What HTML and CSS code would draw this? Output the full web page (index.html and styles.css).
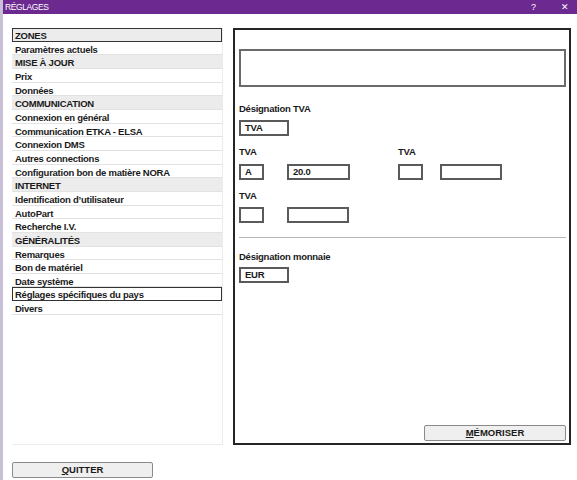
FILE: index.html
```html
<!DOCTYPE html>
<html lang="fr">
<head>
<meta charset="utf-8">
<title>Réglages</title>
<link rel="stylesheet" href="styles.css">
</head>
<body>
<div class="titlebar">
  <span class="title">RÉGLAGES</span>
  <span class="tb-btns"><span class="help">?</span><span class="close">✕</span></span>
</div>
<div class="window">
  <div class="leftcol">
    <ul class="list">
      <li class="hdr focus">ZONES</li>
      <li>Paramètres actuels</li>
      <li class="hdr">MISE À JOUR</li>
      <li>Prix</li>
      <li>Données</li>
      <li class="hdr">COMMUNICATION</li>
      <li>Connexion en général</li>
      <li>Communication ETKA - ELSA</li>
      <li>Connexion DMS</li>
      <li>Autres connections</li>
      <li>Configuration bon de matière NORA</li>
      <li class="hdr">INTERNET</li>
      <li>Identification d’utilisateur</li>
      <li>AutoPart</li>
      <li>Recherche I.V.</li>
      <li class="hdr">GÉNÉRALITÉS</li>
      <li>Remarques</li>
      <li>Bon de matériel</li>
      <li>Date système</li>
      <li class="sel">Réglages spécifiques du pays</li>
      <li>Divers</li>
    </ul>
    <button class="btn quit"><u>Q</u>UITTER</button>
  </div>
  <div class="panel">
    <div class="topbox"></div>
    <div class="label l1">Désignation TVA</div>
    <div class="field w50">TVA</div>
    <div class="grid g1">
      <div class="label">TVA</div>
      <div class="label">TVA</div>
      <div class="pair">
        <div class="field w25">A</div>
        <div class="field w63">20.0</div>
      </div>
      <div class="pair p2">
        <div class="field w25"></div>
        <div class="field w62"></div>
      </div>
    </div>
    <div class="grid g2">
      <div class="label">TVA</div>
      <div class="pair">
        <div class="field w25"></div>
        <div class="field w62"></div>
      </div>
    </div>
    <div class="sep"></div>
    <div class="label l2">Désignation monnaie</div>
    <div class="field w50">EUR</div>
    <div class="actions">
      <button class="btn save"><u>M</u>ÉMORISER</button>
    </div>
  </div>
</div>
</body>
</html>
```
FILE: styles.css
```css
* { box-sizing: border-box; }
html, body { margin: 0; padding: 0; background: #fff; }
body {
  width: 577px;
  height: 480px;
  overflow: hidden;
  font-family: "Liberation Sans", Arial, sans-serif;
  font-size: 9.5px;
  letter-spacing: -0.25px;
  font-weight: bold;
  color: #1a1a1a;
  border-left: 3px solid #c8c0d6;
}
.titlebar {
  height: 14px;
  background: #6c2a90;
  color: #fff;
  display: flex;
  align-items: center;
  justify-content: space-between;
  padding: 0 8px 0 2px;
  font-size: 8.5px;
  font-weight: normal;
  letter-spacing: 0;
}
.title { letter-spacing: -0.4px; }
.tb-btns { display: flex; gap: 25px; font-size: 9px; }
.window {
  display: flex;
  padding: 14px 0 0 9px;
}
.leftcol { width: 211px; display: flex; flex-direction: column; }
.list {
  list-style: none;
  margin: 0;
  padding: 0;
  height: 417px;
  border: 1px solid #ececec;
  border-top: none;
  border-left: none;
}
.list li {
  height: 13.67px;
  line-height: 13px;
  padding: 1px 0 0 3px;
  border-bottom: 1px solid #e2e2e2;
  white-space: nowrap;
}
.list li.hdr { background: #ececec; }
.list li.focus, .list li.sel { border: 1px solid #333; line-height: 11.5px; padding: 1px 0 0 2px; }
.btn {
  font-family: "Liberation Sans", Arial, sans-serif;
  font-weight: bold;
  font-size: 9.5px;
  color: #1a1a1a;
  background: #efefef;
  border: 1px solid #8a8a8a;
  border-radius: 2px;
  height: 16px;
  padding: 0;
  line-height: 14px;
}
.btn u { text-decoration-thickness: 1px; }
.quit { width: 141px; margin-top: 17px; }
.panel {
  margin-left: 10px;
  width: 338px;
  height: 417px;
  border: 2px solid #252525;
  padding: 19px 3px 2px 4px;
  display: flex;
  flex-direction: column;
  align-items: flex-start;
}
.topbox {
  width: 327px;
  height: 38px;
  border: 2px solid #6a6a6a;
  flex: none;
}
.label { height: 12px; line-height: 12px; }
.l1 { margin-top: 16px; }
.field {
  height: 16px;
  border: 2px solid #5a5a5a;
  line-height: 12px;
  padding-left: 4px;
  flex: none;
}
.l1 + .field { margin-top: 5px; }
.w50 { width: 50px; }
.w25 { width: 25px; }
.w63 { width: 63px; }
.w62 { width: 62px; }
.grid {
  display: grid;
  grid-template-columns: 159px auto;
  row-gap: 6px;
}
.g1 { margin-top: 10px; }
.g2 { margin-top: 10px; row-gap: 5px; grid-template-columns: 159px; }
.pair { display: flex; gap: 23px; }
.pair.p2 { gap: 17px; }
.sep {
  width: 327px;
  height: 1px;
  background: #b4b4b4;
  margin-top: 14px;
}
.l2 { margin-top: 13px; }
.l2 + .field { margin-top: 4px; }
.actions {
  margin-top: auto;
  width: 327px;
  display: flex;
  justify-content: flex-end;
}
.save { width: 142px; }
```
